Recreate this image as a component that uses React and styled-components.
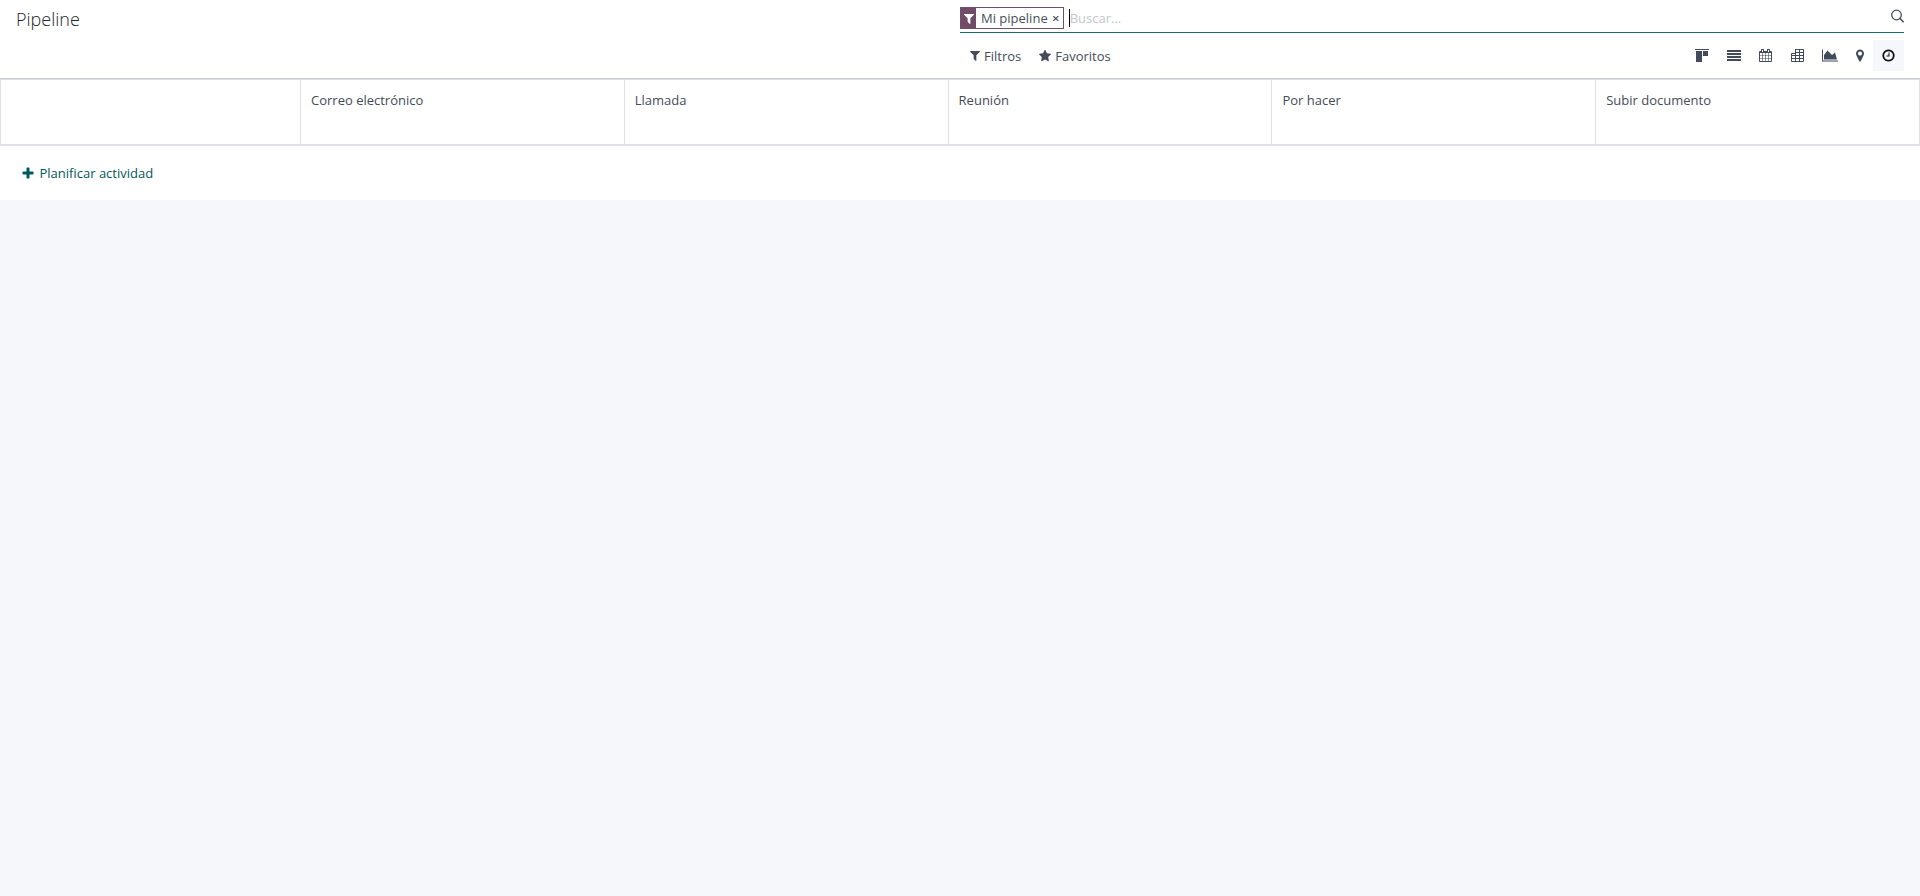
import React from 'react';
import styled, { createGlobalStyle } from 'styled-components';

const GlobalStyle = createGlobalStyle`
  *, *::before, *::after { box-sizing: border-box; }
  body {
    margin: 0;
    background: #f5f7fa;
    color: #495057;
    font-family: "Open Sans", "Noto Sans", sans-serif;
    font-size: 13px;
    line-height: 20px;
  }
  button, input { font: inherit; color: inherit; }
  button { border: 0; padding: 0; background: none; cursor: pointer; }
`;

const Header = styled.header`
  display: grid;
  grid-template-columns: 1fr 1fr;
  padding-right: 16px;
  column-gap: 16px;
  background: #fff;
  border-bottom: 1px solid #c9ccd2;
`;

const Title = styled.h1`
  margin: 0;
  padding: 6px 16px;
  color: #212529;
  font-size: 18px;
  font-weight: 300;
  line-height: 26px;
`;

const ControlPanel = styled.div`
  display: flex;
  flex-direction: column;
`;

const SearchBar = styled.div`
  display: flex;
  align-items: center;
  height: 33px;
  padding-top: 4px;
  border-bottom: 1px solid #1a6f73;
`;

const Facet = styled.div`
  display: flex;
  align-items: stretch;
  height: 22px;
  margin-right: 5px;
  border: 1px solid #71506a;
  line-height: 20px;
`;

const FacetIcon = styled.span`
  display: flex;
  align-items: center;
  justify-content: center;
  width: 15px;
  background: #714b67;
  color: #fff;
`;

const FacetLabel = styled.span`
  padding: 0 4px 0 5px;
`;

const FacetRemove = styled.button`
  width: 8px;
  margin-right: 3px;
  font-weight: 600;
`;

const SearchInput = styled.input`
  flex: 1;
  min-width: 0;
  height: 18px;
  padding: 0;
  border: 0;
  border-left: 1px solid #000;
  outline: 0;
  background: transparent;
  &::placeholder { color: #c3c6cb; opacity: 1; }
`;

const SearchButton = styled.button`
  display: flex;
  padding-bottom: 4px;
`;

const ToolRow = styled.div`
  display: flex;
  justify-content: space-between;
  padding: 7px 0;
`;

const Menus = styled.div`
  display: flex;
  gap: 18px;
  padding-left: 10px;
`;

const MenuButton = styled.button`
  display: flex;
  align-items: center;
  gap: 4px;
  color: #454b58;
  font-weight: 500;
`;

const Views = styled.nav`
  display: flex;
`;

const ViewButton = styled.button`
  display: flex;
  align-items: center;
  justify-content: center;
  height: 31px;
  padding: 0 9px;
  color: ${(p) => (p.$active ? '#111' : '#434b5a')};
  background: ${(p) => (p.$active ? '#f5f7fa' : 'transparent')};
`;

const ActivityTable = styled.table`
  width: 100%;
  table-layout: fixed;
  border-collapse: collapse;
  background: #fff;
`;

const HeadCell = styled.th`
  width: ${(p) => p.$width || 'auto'};
  height: 65px;
  padding: 10px;
  border: 1px solid #dee0e3;
  border-bottom-width: 2px;
  color: #454b58;
  font-weight: 500;
  text-align: left;
  vertical-align: top;
`;

const FootCell = styled.td`
  height: 55px;
  padding: 0 21px;
`;

const ScheduleButton = styled.button`
  display: flex;
  align-items: center;
  gap: 6px;
  color: #01585c;
  font-weight: 500;
`;

const Svg = styled.svg`
  display: block;
  flex: none;
  fill: currentColor;
`;

const ICONS = {
  filter: { w: 10, h: 11, box: '192 128 1408 1536', d: 'M1595 295q17 41-14 70l-493 493v742q0 42-39 59-13 5-25 5-27 0-45-19l-256-256q-19-19-19-45v-486l-493-493q-31-29-14-70 17-39 59-39h1280q42 0 59 39z' },
  star: { w: 12, box: '64 64 1664 1664', d: 'M1728 647q0 22-26 48l-363 354 86 500q1 7 1 20 0 21-10.5 35.5t-30.5 14.5q-19 0-40-12l-449-236-449 236q-22 12-40 12-21 0-31.5-14.5t-10.5-35.5q0-6 2-20l86-500-364-354q-25-27-25-48 0-37 56-46l502-73 225-455q19-41 49-41t49 41l225 455 502 73q56 9 56 46z' },
  plus: { w: 12, box: '128 64 1536 1536', d: 'M1600 736v192q0 40-28 68t-68 28h-416v416q0 40-28 68t-68 28h-192q-40 0-68-28t-28-68v-416h-416q-40 0-68-28t-28-68v-192q0-40 28-68t68-28h416v-416q0-40 28-68t68-28h192q40 0 68 28t28 68v416h416q40 0 68 28t28 68z' },
  kanban: { w: 14, h: 13, box: '0 0 14 13', d: 'M0 0h14v1H0zM1 2h6v11H1zM8 2h5v5H8z' },
  list: { w: 14, h: 13, box: '0 0 14 13', d: 'M0 1h14v2H0zM0 4h14v2H0zM0 7h14v2H0zM0 10h14v2H0z' },
  calendar: { w: 13, h: 13, box: '0 0 13 13', d: 'M2 1a1 1 0 0 1 3 0v1h3V1a1 1 0 0 1 3 0v1h1a1 1 0 0 1 1 1v9a1 1 0 0 1-1 1H1a1 1 0 0 1-1-1V3a1 1 0 0 1 1-1h1zM3 1v2h1V1zM9 1v2h1V1zM1 4v2.4h2.2V4zM3.8 4v2.4h2.4V4zM6.8 4v2.4h2.4V4zM9.8 4v2.4H12V4zM1 7v2.2h2.2V7zM3.8 7v2.2h2.4V7zM6.8 7v2.2h2.4V7zM9.8 7v2.2H12V7zM1 9.8V12h2.2V9.8zM3.8 9.8V12h2.4V9.8zM6.8 9.8V12h2.4V9.8zM9.8 9.8V12H12V9.8z' },
  pivot: { w: 14, h: 13, box: '0 0 14 13', d: 'M5 0h8a1 1 0 0 1 1 1v11a1 1 0 0 1-1 1H2a1 1 0 0 1-1-1V5a1 1 0 0 1 1-1h3zM6 1v2h3V1zM10 1v2h3V1zM2 5v1h3V5zM6 4v2h3V4zM10 4v2h3V4zM2 7v2h3V7zM6 7v2h3V7zM10 7v2h3V7zM2 10v2h3v-2zM6 10v2h3v-2zM10 10v2h3v-2z' },
  area: { w: 16, h: 13, box: '-128 64 2048 1664', d: 'M1920 1536v128h-2048v-1536h128v1408h1920zm-384-1024l256 896h-1664v-576l448-576 576 576z' },
  marker: { w: 8, h: 13, box: '384 64 1024 1664', d: 'M1152 640q0-106-75-181t-181-75-181 75-75 181 75 181 181 75 181-75 75-181zm256 0q0 109-33 179l-364 774q-16 33-47.5 52t-67.5 19-67.5-19-46.5-52l-365-774q-33-70-33-179 0-212 150-362t362-150 362 150 150 362z' },
  clock: { w: 13, h: 13, box: '80 80 1632 1632', d: 'M1024 544v448q0 14-9 23t-23 9h-320q-14 0-23-9t-9-23v-64q0-14 9-23t23-9h224v-352q0-14 9-23t23-9h64q14 0 23 9t9 23zm416 352q0-148-73-273t-198-198-273-73-273 73-198 198-73 273 73 273 198 198 273 73 273-73 198-198 73-273zm224 0q0 209-103 385.5t-279.5 279.5-385.5 103-385.5-103-279.5-279.5-103-385.5 103-385.5 279.5-279.5 385.5-103 385.5 103 279.5 279.5 103 385.5z' },
};

function Icon({ name }) {
  const { w, h = w, box, d } = ICONS[name];
  return (
    <Svg width={w} height={h} viewBox={box} aria-hidden="true">
      <path fillRule="evenodd" d={d} />
    </Svg>
  );
}

function SearchIcon() {
  return (
    <svg width="13" height="14" viewBox="0 0 13 14" fill="none" stroke="#495057" strokeWidth="1.3" strokeLinecap="round" aria-hidden="true">
      <circle cx="5.5" cy="6" r="4.8" />
      <path d="M9 9.5l3.2 3.2" strokeWidth="1.6" />
    </svg>
  );
}

const VIEWS = [
  ['kanban', 'Kanban'],
  ['list', 'Lista'],
  ['calendar', 'Calendario'],
  ['pivot', 'Tabla dinámica'],
  ['area', 'Gráfico'],
  ['marker', 'Mapa'],
  ['clock', 'Actividad'],
];

const ACTIVITIES = ['Correo electrónico', 'Llamada', 'Reunión', 'Por hacer', 'Subir documento'];

export default function App() {
  return (
    <>
      <GlobalStyle />
      <Header>
        <Title>Pipeline</Title>
        <ControlPanel>
          <SearchBar role="search">
            <Facet>
              <FacetIcon><Icon name="filter" /></FacetIcon>
              <FacetLabel>Mi pipeline</FacetLabel>
              <FacetRemove type="button" aria-label="Eliminar">×</FacetRemove>
            </Facet>
            <SearchInput type="text" placeholder="Buscar..." aria-label="Buscar" />
            <SearchButton type="button" aria-label="Buscar"><SearchIcon /></SearchButton>
          </SearchBar>
          <ToolRow>
            <Menus>
              <MenuButton type="button"><Icon name="filter" />Filtros</MenuButton>
              <MenuButton type="button"><Icon name="star" />Favoritos</MenuButton>
            </Menus>
            <Views>
              {VIEWS.map(([name, label]) => (
                <ViewButton key={name} type="button" aria-label={label} $active={name === 'clock'}>
                  <Icon name={name} />
                </ViewButton>
              ))}
            </Views>
          </ToolRow>
        </ControlPanel>
      </Header>
      <ActivityTable>
        <thead>
          <tr>
            <HeadCell $width="300px" />
            {ACTIVITIES.map((name) => (
              <HeadCell key={name} scope="col">{name}</HeadCell>
            ))}
          </tr>
        </thead>
        <tfoot>
          <tr>
            <FootCell colSpan={6}>
              <ScheduleButton type="button"><Icon name="plus" />Planificar actividad</ScheduleButton>
            </FootCell>
          </tr>
        </tfoot>
      </ActivityTable>
    </>
  );
}
